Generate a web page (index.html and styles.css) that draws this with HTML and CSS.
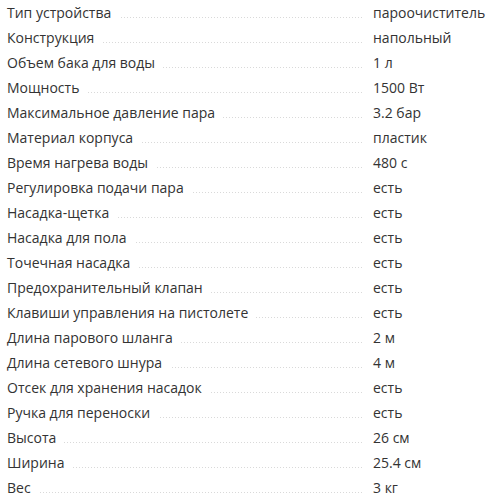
FILE: index.html
```html
<!DOCTYPE html>
<html lang="ru">
<head>
<meta charset="utf-8">
<link rel="stylesheet" href="styles.css">
</head>
<body>
<div class="specs">
  <div class="row"><div class="name"><span>Тип устройства</span></div><div class="value">пароочиститель</div></div>
  <div class="row"><div class="name"><span>Конструкция</span></div><div class="value">напольный</div></div>
  <div class="row"><div class="name"><span>Объем бака для воды</span></div><div class="value">1 л</div></div>
  <div class="row"><div class="name"><span>Мощность</span></div><div class="value">1500 Вт</div></div>
  <div class="row"><div class="name"><span>Максимальное давление пара</span></div><div class="value">3.2 бар</div></div>
  <div class="row"><div class="name"><span>Материал корпуса</span></div><div class="value">пластик</div></div>
  <div class="row"><div class="name"><span>Время нагрева воды</span></div><div class="value">480 с</div></div>
  <div class="row"><div class="name"><span>Регулировка подачи пара</span></div><div class="value">есть</div></div>
  <div class="row"><div class="name"><span>Насадка-щетка</span></div><div class="value">есть</div></div>
  <div class="row"><div class="name"><span>Насадка для пола</span></div><div class="value">есть</div></div>
  <div class="row"><div class="name"><span>Точечная насадка</span></div><div class="value">есть</div></div>
  <div class="row"><div class="name"><span>Предохранительный клапан</span></div><div class="value">есть</div></div>
  <div class="row"><div class="name"><span>Клавиши управления на пистолете</span></div><div class="value">есть</div></div>
  <div class="row"><div class="name"><span>Длина парового шланга</span></div><div class="value">2 м</div></div>
  <div class="row"><div class="name"><span>Длина сетевого шнура</span></div><div class="value">4 м</div></div>
  <div class="row"><div class="name"><span>Отсек для хранения насадок</span></div><div class="value">есть</div></div>
  <div class="row"><div class="name"><span>Ручка для переноски</span></div><div class="value">есть</div></div>
  <div class="row"><div class="name"><span>Высота</span></div><div class="value">26 см</div></div>
  <div class="row"><div class="name"><span>Ширина</span></div><div class="value">25.4 см</div></div>
  <div class="row"><div class="name"><span>Вес</span></div><div class="value">3 кг</div></div>
</div>
</body>
</html>
```
FILE: styles.css
```css
html, body {
  margin: 0;
  padding: 0;
  background: #fff;
}
body {
  font-family: "Open Sans", "Liberation Sans", sans-serif;
  font-size: 14px;
  color: #333;
  overflow: hidden;
}
.specs {
  padding: 0 0 0 7px;
}
.row {
  display: flex;
  height: 25px;
  line-height: 25px;
  white-space: nowrap;
}
.name {
  width: 355px;
  flex: none;
  background-image: linear-gradient(to right, #d9d9d9 1px, transparent 1px);
  background-size: 3px 1px;
  background-repeat: repeat-x;
  background-position: 0 17px;
}
.name span {
  background: #fff;
  padding-right: 8px;
}
.value {
  padding-left: 11px;
}
```
